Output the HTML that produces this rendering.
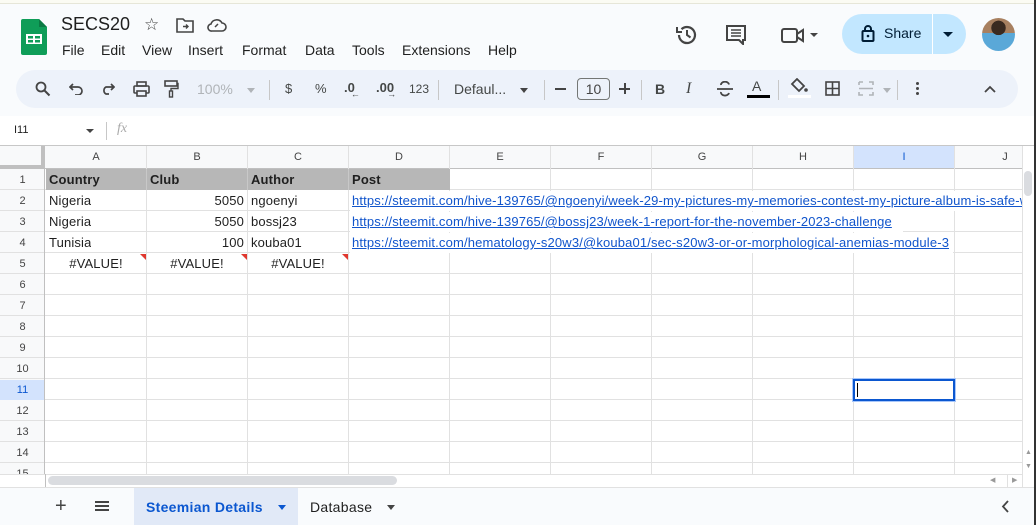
<!DOCTYPE html>
<html><head><meta charset="utf-8"><style>
*{margin:0;padding:0;box-sizing:border-box}
body{width:1036px;height:525px;overflow:hidden;background:#f9fbfd;font-family:"Liberation Sans",Arial,sans-serif;position:relative;color:#1f1f1f}
.a{position:absolute}
.tb{position:absolute;top:70px;left:16px;width:1002px;height:38px;background:#edf2fa;border-radius:19px}
.ic{position:absolute;font-size:14px;color:#444746}
.cell{position:absolute;font-size:13px;line-height:20px;white-space:nowrap;overflow:hidden;letter-spacing:0.15px}
.lnk{color:#1155cc;text-decoration:underline}
.rh{position:absolute;left:0;width:45px;text-align:center;font-size:11px;color:#444;line-height:20px}
.ch{position:absolute;top:146px;height:23px;text-align:center;font-size:11px;color:#444;line-height:23px}
</style></head><body>
<div class="a" style="left:0;top:0;width:1036px;height:4px;background:#fbfbf3;border-bottom:1px solid #e6e6d8"></div>
<div class="a" style="left:1034px;top:0;width:2px;height:525px;background:#333"></div>
<svg class="a" style="left:21px;top:19px" width="26" height="36" viewBox="0 0 26 36"><path d="M2 0h16l8 8v26a2 2 0 0 1-2 2H2a2 2 0 0 1-2-2V2a2 2 0 0 1 2-2z" fill="#0f9d58"/><path d="M18 0l8 8h-8z" fill="#0b7a44"/><rect x="5" y="15" width="16" height="10" fill="#fff"/><rect x="7" y="17" width="5" height="2.5" fill="#0f9d58"/><rect x="14" y="17" width="5" height="2.5" fill="#0f9d58"/><rect x="7" y="21" width="5" height="2.5" fill="#0f9d58"/><rect x="14" y="21" width="5" height="2.5" fill="#0f9d58"/></svg>
<div class="a" style="left:61px;top:14px;font-size:18px">SECS20</div>
<div class="a" style="left:144px;top:15px;font-size:17px;color:#444">☆</div>
<svg class="a" style="left:176px;top:18px" width="18" height="15" viewBox="0 0 18 15"><path d="M1 1h6l2 2h8v11H1z" fill="none" stroke="#444" stroke-width="1.6"/><path d="M7 8.5h5M10 6.5l2 2-2 2" stroke="#444" stroke-width="1.4" fill="none"/></svg>
<svg class="a" style="left:207px;top:18px" width="20" height="14" viewBox="0 0 20 14"><path d="M5 13h10a4 4 0 0 0 0-8 6 6 0 0 0-11 1 3.5 3.5 0 0 0 1 7z" fill="none" stroke="#444" stroke-width="1.6"/><path d="M8 9l3-3" stroke="#444" stroke-width="1.5"/></svg>
<div class="a" style="left:62px;top:42px;font-size:14px">
<span style="position:absolute;left:0">File</span><span style="position:absolute;left:39px">Edit</span><span style="position:absolute;left:80px">View</span><span style="position:absolute;left:126px">Insert</span><span style="position:absolute;left:180px">Format</span><span style="position:absolute;left:243px">Data</span><span style="position:absolute;left:290px">Tools</span><span style="position:absolute;left:340px">Extensions</span><span style="position:absolute;left:426px">Help</span></div>
<svg class="a" style="left:676px;top:24px" width="22" height="22" viewBox="0 0 22 22"><path d="M3 11a8 8 0 1 0 2.5-5.8" fill="none" stroke="#444" stroke-width="2.2"/><path d="M1 3v5h5" fill="none" stroke="#444" stroke-width="2"/><path d="M11 6v5l3.5 2.5" fill="none" stroke="#444" stroke-width="2"/></svg>
<svg class="a" style="left:726px;top:25px" width="21" height="20" viewBox="0 0 21 20"><path d="M1 1h18v14h-2v4l-4-4H1z" fill="none" stroke="#444" stroke-width="2"/><path d="M5 5h10M5 8h10M5 11h10" stroke="#444" stroke-width="1.6"/></svg>
<svg class="a" style="left:780px;top:26px" width="42" height="18" viewBox="0 0 42 18"><rect x="2" y="3" width="15" height="13" rx="2" fill="none" stroke="#444" stroke-width="2"/><path d="M17 8l6-4v11l-6-4" fill="none" stroke="#444" stroke-width="2"/><path d="M30 7h8l-4 4z" fill="#444"/></svg>
<div class="a" style="left:842px;top:14px;width:124px;height:40px;border-radius:20px;background:#c2e7ff"></div>
<div class="a" style="left:932px;top:14px;width:1px;height:40px;background:#fff"></div>
<svg class="a" style="left:861px;top:24px" width="14" height="18" viewBox="0 0 14 18"><rect x="1.5" y="7" width="11" height="10" rx="1" fill="none" stroke="#001d35" stroke-width="2"/><path d="M4 7V5a3 3 0 0 1 6 0v2" fill="none" stroke="#001d35" stroke-width="2"/><circle cx="7" cy="12" r="1.3" fill="#001d35"/></svg>
<div class="a" style="left:884px;top:25px;font-size:14px;color:#001d35">Share</div>
<div class="a" style="left:943px;top:32px;border:5px solid transparent;border-top:5px solid #001d35"></div>
<div class="a" style="left:982px;top:18px;width:33px;height:33px;border-radius:50%;background:radial-gradient(circle at 50% 30%,#3a2a20 0 25%,transparent 26%),linear-gradient(#a88060 0 45%,#5aa8d8 45% 100%)"></div>
<div class="tb"></div>
<svg class="a" style="left:35px;top:81px" width="16" height="16" viewBox="0 0 16 16"><circle cx="6" cy="6" r="4.5" fill="none" stroke="#444" stroke-width="1.8"/><path d="M9.5 9.5l5 5" stroke="#444" stroke-width="2"/></svg>
<svg class="a" style="left:69px;top:83px" width="14" height="12" viewBox="0 0 14 12"><path d="M4 1L1 4l3 3M1 4h8a4 4 0 0 1 0 8H6" fill="none" stroke="#444" stroke-width="1.7"/></svg>
<svg class="a" style="left:101px;top:83px" width="14" height="12" viewBox="0 0 14 12"><path d="M10 1l3 3-3 3M13 4H5a4 4 0 0 0 0 7h3" fill="none" stroke="#444" stroke-width="1.7"/></svg>
<svg class="a" style="left:133px;top:81px" width="17" height="16" viewBox="0 0 17 16"><rect x="4" y="1" width="9" height="4" fill="none" stroke="#444" stroke-width="1.6"/><rect x="1" y="5" width="15" height="7" rx="1" fill="none" stroke="#444" stroke-width="1.6"/><rect x="4" y="10" width="9" height="5" fill="#edf2fa" stroke="#444" stroke-width="1.6"/></svg>
<svg class="a" style="left:164px;top:80px" width="15" height="18" viewBox="0 0 15 18"><rect x="1" y="1" width="12" height="5" fill="none" stroke="#444" stroke-width="1.6"/><path d="M13 3.5h1v5H7v3" fill="none" stroke="#444" stroke-width="1.4"/><rect x="5.5" y="11" width="3" height="6" fill="none" stroke="#444" stroke-width="1.4"/></svg>
<div class="ic" style="left:197px;top:81px;color:#b0b4b8;font-size:14px">100%</div>
<div class="a" style="left:247px;top:88px;border:4px solid transparent;border-top:5px solid #b0b4b8"></div>
<div class="a" style="left:269px;top:80px;width:1px;height:20px;background:#c7c7c7"></div>
<div class="ic" style="left:285px;top:81px;font-size:13px">$</div>
<div class="ic" style="left:315px;top:81px;font-size:13px">%</div>
<div class="ic" style="left:344px;top:80px;font-size:13px;font-weight:bold">.0<span style="font-size:9px;position:relative;top:5px;left:-4px">←</span></div>
<div class="ic" style="left:376px;top:80px;font-size:13px;font-weight:bold">.00<span style="font-size:9px;position:relative;top:5px;left:-7px">→</span></div>
<div class="ic" style="left:409px;top:82px;font-size:12px">123</div>
<div class="a" style="left:438px;top:80px;width:1px;height:20px;background:#c7c7c7"></div>
<div class="ic" style="left:454px;top:81px;font-size:14px">Defaul...</div>
<div class="a" style="left:520px;top:88px;border:4px solid transparent;border-top:5px solid #444"></div>
<div class="a" style="left:544px;top:80px;width:1px;height:20px;background:#c7c7c7"></div>
<div class="a" style="left:555px;top:88px;width:11px;height:2px;background:#444"></div>
<div class="a" style="left:577px;top:78px;width:33px;height:22px;border:1px solid #747775;border-radius:4px;font-size:14px;text-align:center;line-height:20px;color:#444">10</div>
<div class="a" style="left:619px;top:88px;width:11px;height:2px;background:#444"></div>
<div class="a" style="left:624px;top:83px;width:2px;height:11px;background:#444"></div>
<div class="a" style="left:641px;top:80px;width:1px;height:20px;background:#c7c7c7"></div>
<div class="ic" style="left:655px;top:81px;font-weight:bold">B</div>
<div class="ic" style="left:686px;top:80px;font-style:italic;font-family:'Liberation Serif';font-size:16px">I</div>
<svg class="a" style="left:716px;top:81px" width="18" height="16" viewBox="0 0 18 16"><path d="M13 3.5A4 3 0 0 0 5 4M1 8h16M5 11a4 3 0 0 0 8 1" fill="none" stroke="#444" stroke-width="1.8"/></svg>
<div class="ic" style="left:752px;top:78px;font-size:14px">A</div>
<div class="a" style="left:747px;top:95px;width:23px;height:3px;background:#000"></div>
<div class="a" style="left:778px;top:80px;width:1px;height:20px;background:#c7c7c7"></div>
<svg class="a" style="left:789px;top:78px" width="20" height="16" viewBox="0 0 20 16"><path d="M8 1l7 7-5 5-7-7z" fill="none" stroke="#444" stroke-width="1.8"/><circle cx="17" cy="12" r="1.8" fill="#444"/></svg>
<div class="a" style="left:788px;top:95px;width:23px;height:3px;background:#fff"></div>
<svg class="a" style="left:825px;top:81px" width="15" height="15" viewBox="0 0 15 15"><rect x="1" y="1" width="13" height="13" fill="none" stroke="#444" stroke-width="1.6"/><path d="M7.5 1v13M1 7.5h13" stroke="#444" stroke-width="1.6"/></svg>
<svg class="a" style="left:858px;top:81px" width="16" height="15" viewBox="0 0 16 15"><path d="M1 1h4M11 1h4v3M1 1v3M1 11v3h4M15 11v3h-4M1 7.5h14" fill="none" stroke="#b0b4b8" stroke-width="1.6"/></svg>
<div class="a" style="left:883px;top:88px;border:4px solid transparent;border-top:5px solid #b0b4b8"></div>
<div class="a" style="left:897px;top:80px;width:1px;height:20px;background:#c7c7c7"></div>
<div class="a" style="left:916px;top:82px;width:3px;height:3px;background:#444;border-radius:50%;box-shadow:0 5px 0 #444,0 10px 0 #444"></div>
<svg class="a" style="left:984px;top:85px" width="12" height="8" viewBox="0 0 12 8"><path d="M1 7l5-5 5 5" fill="none" stroke="#444" stroke-width="1.8"/></svg>
<div class="a" style="left:0;top:116px;width:1034px;height:30px;background:#fff;border-bottom:1px solid #c7c7c7"></div>
<div class="a" style="left:14px;top:124px;font-size:11px">I11</div>
<div class="a" style="left:86px;top:129px;border:4px solid transparent;border-top:4px solid #444"></div>
<div class="a" style="left:106px;top:122px;width:1px;height:18px;background:#c7c7c7"></div>
<div class="a" style="left:117px;top:121px;font-size:14px;font-style:italic;color:#aaa;font-family:'Liberation Serif'">fx</div>
<!-- grid -->
<div class="a" style="left:0;top:146px;width:1022px;height:328px;background:#fff"></div>
<div class="a" style="left:46px;top:146px;width:976px;height:328px;background-image:repeating-linear-gradient(to right,transparent 0 100px,#e1e1e1 100px 101px)"></div>
<div class="a" style="left:0;top:169px;width:1022px;height:305px;background-image:repeating-linear-gradient(to bottom,transparent 0 20px,#e1e1e1 20px 21px)"></div>
<div class="a" style="left:0;top:146px;width:1022px;height:23px;background:#f8f9fa;border-bottom:1px solid #c0c0c0"></div>
<div class="a" style="left:0;top:146px;width:45px;height:23px;background:#f8f9fa;border-right:4px solid #c0c0c0;border-bottom:4px solid #c0c0c0"></div>
<div class="a" style="left:854px;top:146px;width:100px;height:23px;background:#d3e3fd;border-bottom:1px solid #c0c0c0"></div>
<div class="ch" style="left:46px;width:100px">A</div><div class="ch" style="left:147px;width:100px">B</div><div class="ch" style="left:248px;width:100px">C</div><div class="ch" style="left:349px;width:100px">D</div><div class="ch" style="left:450px;width:100px">E</div><div class="ch" style="left:551px;width:100px">F</div><div class="ch" style="left:652px;width:100px">G</div><div class="ch" style="left:753px;width:100px">H</div><div class="ch" style="left:854px;width:100px;color:#0b57d0">I</div><div class="ch" style="left:955px;width:100px">J</div>
<div class="a" style="left:146px;top:146px;width:1px;height:23px;background:#e1e1e1;box-shadow:101px 0 #e1e1e1,202px 0 #e1e1e1,303px 0 #e1e1e1,404px 0 #e1e1e1,505px 0 #e1e1e1,606px 0 #e1e1e1,707px 0 #e1e1e1,808px 0 #e1e1e1"></div>
<div class="a" style="left:0;top:169px;width:45px;height:305px;background-color:#f8f9fa;border-right:1px solid #c0c0c0;background-image:repeating-linear-gradient(to bottom,transparent 0 20px,#e1e1e1 20px 21px)"></div>
<div class="a" style="left:0;top:380px;width:45px;height:20px;background:#d3e3fd;border-right:1px solid #c0c0c0"></div>
<div class="rh" style="top:170px">1</div><div class="rh" style="top:191px">2</div><div class="rh" style="top:212px">3</div><div class="rh" style="top:233px">4</div><div class="rh" style="top:254px">5</div><div class="rh" style="top:275px">6</div><div class="rh" style="top:296px">7</div><div class="rh" style="top:317px">8</div><div class="rh" style="top:338px">9</div><div class="rh" style="top:359px">10</div><div class="rh" style="top:380px;color:#0b57d0">11</div><div class="rh" style="top:401px">12</div><div class="rh" style="top:422px">13</div><div class="rh" style="top:443px">14</div><div class="rh" style="top:464px;height:10px;overflow:hidden">15</div>
<div class="a" style="left:46px;top:169px;width:404px;height:21px;background:#b7b7b7;background-image:linear-gradient(to right,transparent 100px,#c8c8c8 100px 101px,transparent 101px 201px,#c8c8c8 201px 202px,transparent 202px 302px,#c8c8c8 302px 303px,transparent 303px)"></div>
<div class="cell" style="left:49px;top:170px;font-weight:bold">Country</div>
<div class="cell" style="left:150px;top:170px;font-weight:bold">Club</div>
<div class="cell" style="left:251px;top:170px;font-weight:bold">Author</div>
<div class="cell" style="left:352px;top:170px;font-weight:bold">Post</div>
<div class="cell" style="left:49px;top:191px">Nigeria</div><div class="cell" style="left:147px;top:191px;width:97px;text-align:right">5050</div><div class="cell" style="left:251px;top:191px">ngoenyi</div>
<div class="cell" style="left:49px;top:212px">Nigeria</div><div class="cell" style="left:147px;top:212px;width:97px;text-align:right">5050</div><div class="cell" style="left:251px;top:212px">bossj23</div>
<div class="cell" style="left:49px;top:233px">Tunisia</div><div class="cell" style="left:147px;top:233px;width:97px;text-align:right">100</div><div class="cell" style="left:251px;top:233px">kouba01</div>
<div class="a" style="left:350px;top:191px;width:672px;height:20px;background:#fff"></div>
<div class="a" style="left:350px;top:212px;width:553px;height:20px;background:#fff"></div>
<div class="a" style="left:350px;top:233px;width:603px;height:20px;background:#fff"></div>
<div class="cell lnk" style="left:352px;top:191px;width:670px">https://steemit.com/hive-139765/@ngoenyi/week-29-my-pictures-my-memories-contest-my-picture-album-is-safe-with-me</div>
<div class="cell lnk" style="left:352px;top:212px">https://steemit.com/hive-139765/@bossj23/week-1-report-for-the-november-2023-challenge</div>
<div class="cell lnk" style="left:352px;top:233px">https://steemit.com/hematology-s20w3/@kouba01/sec-s20w3-or-or-morphological-anemias-module-3</div>
<div class="cell" style="left:46px;top:254px;width:100px;text-align:center">#VALUE!</div>
<div class="cell" style="left:147px;top:254px;width:100px;text-align:center">#VALUE!</div>
<div class="cell" style="left:248px;top:254px;width:100px;text-align:center">#VALUE!</div>
<div class="a" style="left:140px;top:254px;border-top:6px solid #e0382e;border-left:6px solid transparent"></div>
<div class="a" style="left:241px;top:254px;border-top:6px solid #e0382e;border-left:6px solid transparent"></div>
<div class="a" style="left:342px;top:254px;border-top:6px solid #e0382e;border-left:6px solid transparent"></div>
<div class="a" style="left:852px;top:378px;width:104px;height:24px;border:1px solid #a8c7fa"></div>
<div class="a" style="left:853px;top:379px;width:102px;height:22px;border:2px solid #0b57d0;background:#fff"></div>
<div class="a" style="left:857px;top:383px;width:1px;height:14px;background:#000"></div>
<div class="a" style="left:1022px;top:146px;width:12px;height:341px;background:#fff;border-left:1px solid #e1e1e1"></div>
<div class="a" style="left:1024px;top:171px;width:8px;height:25px;background:#dadce0;border-radius:4px"></div>
<div class="a" style="left:1025px;top:449px;font-size:7px;color:#999">▲</div>
<div class="a" style="left:1025px;top:463px;font-size:7px;color:#999">▼</div>
<div class="a" style="left:0;top:474px;width:1022px;height:13px;background:#fff;border-top:1px solid #e1e1e1"></div>
<div class="a" style="left:45px;top:474px;width:1px;height:13px;background:#c0c0c0"></div>
<div class="a" style="left:48px;top:476px;width:349px;height:9px;background:#dadce0;border-radius:5px"></div>
<div class="a" style="left:990px;top:476px;font-size:7px;color:#999">◀</div><div class="a" style="left:1012px;top:476px;font-size:7px;color:#999">▶</div>
<div class="a" style="left:1007px;top:475px;width:1px;height:12px;background:#e1e1e1"></div>
<div class="a" style="left:0;top:487px;width:1034px;height:38px;background:#f9fbfd;border-top:1px solid #e1e1e1"></div>
<div class="a" style="left:55px;top:495px;font-size:20px;color:#444">+</div>
<div class="a" style="left:95px;top:501px;width:14px;height:2px;background:#444;box-shadow:0 4px #444,0 8px #444"></div>
<div class="a" style="left:134px;top:488px;width:164px;height:37px;background:#e1e9f7"></div>
<div class="a" style="left:146px;top:499px;font-size:14px;font-weight:bold;color:#0b57d0;letter-spacing:0.3px">Steemian Details</div>
<div class="a" style="left:278px;top:505px;border:4px solid transparent;border-top:5px solid #0b57d0"></div>
<div class="a" style="left:310px;top:499px;font-size:14px;color:#1f1f1f;letter-spacing:0.3px">Database</div>
<div class="a" style="left:387px;top:505px;border:4px solid transparent;border-top:5px solid #444"></div>
<svg class="a" style="left:1001px;top:500px" width="9" height="13" viewBox="0 0 9 13"><path d="M7 1L2 6.5 7 12" fill="none" stroke="#444" stroke-width="1.8"/></svg>
</body></html>
